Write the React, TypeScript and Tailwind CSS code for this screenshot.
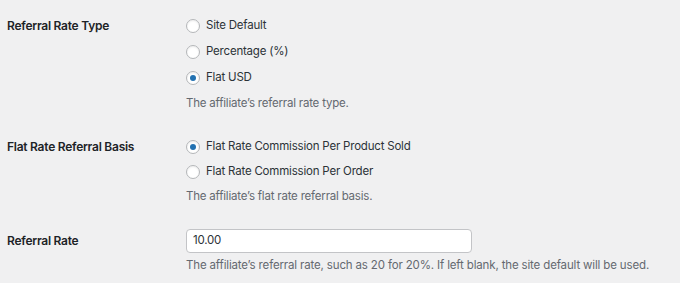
import React from "react";

function Radio({ checked, label }: { checked?: boolean; label: string }) {
  return (
    <div className="flex h-full items-center">
      <span className="flex h-[14px] w-[14px] shrink-0 items-center justify-center rounded-full border border-[#b4b6b9] bg-white shadow-[inset_0_1px_2px_rgba(0,0,0,0.08)]">
        {checked && <span className="h-[6px] w-[6px] rounded-full bg-[#2271b1]" />}
      </span>
      <span className="ml-[6px] text-[#2c3338]">{label}</span>
    </div>
  );
}

export default function App() {
  return (
    <div
      className="h-[283px] w-[680px] overflow-hidden bg-[#f0f0f1] pl-[7px] text-[11.5px] tracking-[-0.2px]"
      style={{ fontFamily: "Inter, 'Noto Sans', sans-serif" }}
    >
      <div className="grid grid-cols-[179px_1fr] pt-[13px]">
        <div className="flex h-[26px] items-center text-[12px] font-semibold tracking-[-0.25px] text-[#1d2327]">Referral Rate Type</div>
        <div className="flex flex-col">
          <div className="h-[26px]"><Radio label="Site Default" /></div>
          <div className="h-[26px]"><Radio label="Percentage (%)" /></div>
          <div className="h-[26px]"><Radio checked label="Flat USD" /></div>
          <div className="flex h-[26px] items-center text-[#646970]">The affiliate’s referral rate type.</div>
        </div>
      </div>
      <div className="mt-[17px] grid grid-cols-[179px_1fr]">
        <div className="flex h-[25px] items-center text-[12px] font-semibold tracking-[-0.25px] text-[#1d2327]">Flat Rate Referral Basis</div>
        <div className="flex flex-col">
          <div className="h-[25px]"><Radio checked label="Flat Rate Commission Per Product Sold" /></div>
          <div className="h-[25px]"><Radio label="Flat Rate Commission Per Order" /></div>
          <div className="flex h-[25px] items-center text-[#646970]">The affiliate’s flat rate referral basis.</div>
        </div>
      </div>
      <div className="mt-[20px] grid grid-cols-[179px_1fr]">
        <div className="flex h-[24px] items-center text-[12px] font-semibold tracking-[-0.25px] text-[#1d2327]">Referral Rate</div>
        <div className="flex flex-col">
          <div className="flex h-[24px] w-[286px] items-center rounded-[4px] border border-[#c3c4c7] bg-white pl-[6px] text-[#2c3338]">
            10.00
          </div>
          <div className="flex h-[25px] items-center whitespace-nowrap tracking-[-0.15px] text-[#646970]">
            The affiliate’s referral rate, such as 20 for 20%. If left blank, the site default will be used.
          </div>
        </div>
      </div>
    </div>
  );
}
